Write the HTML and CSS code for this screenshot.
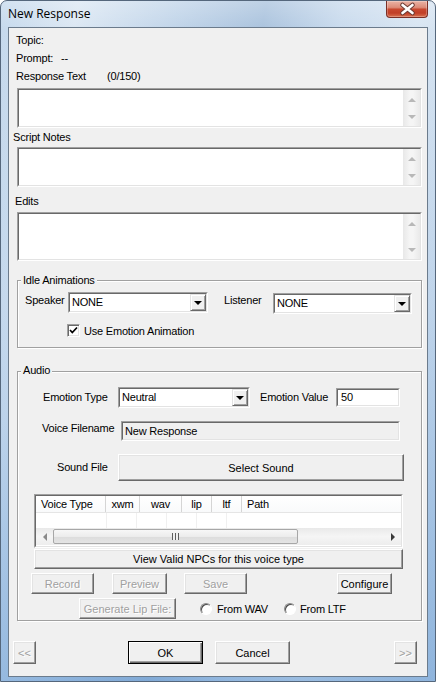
FILE: index.html
```html
<!DOCTYPE html>
<html lang="en">
<head>
    <meta charset="UTF-8">
    <title>New Response</title>
    <link rel="stylesheet" href="styles.css">
</head>
<body>
    <div class="window">
        <div class="titlebar">
            <span class="title">New Response</span>
            <div class="close-btn">
                <svg width="40" height="16" viewBox="0 0 40 16">
                    <path d="M15.5 4 L25.5 12 M25.5 4 L15.5 12" stroke="#6b3a33" stroke-width="4.6" stroke-linecap="round"/>
                    <path d="M15.5 4 L25.5 12 M25.5 4 L15.5 12" stroke="#fff" stroke-width="2.6" stroke-linecap="round"/>
                </svg>
            </div>
        </div>

        <div class="client">
            <div class="txt topic">Topic:</div>
            <div class="txt prompt"><span class="prompt-lbl">Prompt:</span><span>--</span></div>
            <div class="txt resp"><span class="resp-lbl">Response Text</span><span>(0/150)</span></div>
            <div class="memo memo-resp">
                <div class="memo-in">
                    <div class="vscroll"><i class="tri up"></i><i class="tri down"></i></div>
                </div>
            </div>

            <div class="txt notes-lbl">Script Notes</div>
            <div class="memo memo-notes">
                <div class="memo-in">
                    <div class="vscroll"><i class="tri up"></i><i class="tri down"></i></div>
                </div>
            </div>

            <div class="txt edits-lbl">Edits</div>
            <div class="memo memo-edits">
                <div class="memo-in">
                    <div class="vscroll"><i class="tri up"></i><i class="tri down"></i></div>
                </div>
            </div>

            <!-- idle animations -->
            <div class="group idle">
                <span class="group-title">Idle Animations</span>
                <div class="row anim-row">
                    <span class="lbl speaker-lbl">Speaker</span>
                    <div class="combo speaker-combo">
                        <div class="combo-in">
                            <span class="combo-val">NONE</span>
                            <span class="drop"><i class="tri blk"></i></span>
                        </div>
                    </div>
                    <span class="lbl listener-lbl">Listener</span>
                    <div class="combo listener-combo">
                        <div class="combo-in">
                            <span class="combo-val">NONE</span>
                            <span class="drop"><i class="tri blk"></i></span>
                        </div>
                    </div>
                </div>
                <div class="row check-row">
                    <span class="checkbox">
                        <svg width="9" height="9" viewBox="0 0 9 9"><path d="M1 4 L3.3 6.5 L8 1.5" fill="none" stroke="#000" stroke-width="1.7"/></svg>
                    </span>
                    <span class="check-lbl">Use Emotion Animation</span>
                </div>
            </div>

            <!-- audio -->
            <div class="group audio">
                <span class="group-title">Audio</span>
                <div class="row emo-row">
                    <span class="lbl emo-type-lbl">Emotion Type</span>
                    <div class="combo emo-combo">
                        <div class="combo-in">
                            <span class="combo-val">Neutral</span>
                            <span class="drop"><i class="tri blk"></i></span>
                        </div>
                    </div>
                    <span class="lbl emo-val-lbl">Emotion Value</span>
                    <div class="edit emo-val"><div class="edit-in">50</div></div>
                </div>
                <div class="row voice-row">
                    <span class="lbl voice-lbl">Voice Filename</span>
                    <div class="edit voice-file"><div class="edit-in readonly">New Response</div></div>
                </div>
                <div class="row sound-row">
                    <span class="lbl sound-lbl">Sound File</span>
                    <button class="btn select-sound">Select Sound</button>
                </div>

                <div class="listview">
                    <div class="lv-in">
                        <div class="lv-head">
                            <span class="col c1">Voice Type</span>
                            <span class="col c2">xwm</span>
                            <span class="col c3">wav</span>
                            <span class="col c4">lip</span>
                            <span class="col c5">ltf</span>
                            <span class="col c6">Path</span>
                        </div>
                        <div class="lv-rows">
                            <span class="rc first"></span><span class="rc"></span><span class="rc"></span><span class="rc"></span><span class="rc"></span>
                        </div>
                        <div class="hscroll">
                            <span class="sb-btn"><i class="tri left"></i></span>
                            <div class="thumb"><span class="grip"></span></div>
                            <span class="sb-space"></span>
                            <span class="sb-btn"><i class="tri right"></i></span>
                        </div>
                    </div>
                </div>
                <button class="btn npc-btn">View Valid NPCs for this voice type</button>

                <div class="row rec-row">
                    <button class="btn disabled rec">Record</button>
                    <button class="btn disabled preview">Preview</button>
                    <button class="btn disabled save">Save</button>
                    <button class="btn configure">Configure</button>
                </div>
                <div class="row lip-row">
                    <button class="btn disabled gen-lip">Generate Lip File:</button>
                    <span class="radio wav-radio"></span>
                    <span class="radio-lbl wav-lbl">From WAV</span>
                    <span class="radio"></span>
                    <span class="radio-lbl ltf-lbl">From LTF</span>
                </div>
            </div>

            <div class="row dlg-buttons">
                <button class="btn disabled prev">&lt;&lt;</button>
                <button class="btn default ok">OK</button>
                <button class="btn cancel">Cancel</button>
                <button class="btn disabled next">&gt;&gt;</button>
            </div>
        </div>
    </div>
</body>
</html>
```

FILE: styles.css
```css
* {
    box-sizing: border-box;
}
body {
    margin: 0;
    font-family: "Liberation Sans", Arial, sans-serif;
    font-size: 11px;
    letter-spacing: -0.2px;
    color: #000;
    background: #fff;
}
.window {
    width: 436px;
    height: 682px;
    border: 1px solid #55677c;
    border-radius: 7px 7px 0 0;
    padding: 0 7px 4px 7px;
    display: flex;
    flex-direction: column;
    background:
        linear-gradient(180deg, rgba(255,255,255,0.25) 0, rgba(255,255,255,0) 30px, rgba(110,160,215,0.15) 300px, rgba(80,140,205,0.45) 100%),
        linear-gradient(100deg, #c4d8ec 0%, #dbe7f3 14%, #c0d4e9 32%, #a9c2dd 48%, #c8daed 62%, #d8e5f2 76%, #c3d6ea 100%);
}
.titlebar {
    height: 26px;
    display: flex;
    justify-content: space-between;
    align-items: flex-start;
}
.title {
    font-family: "Open Sans", "Noto Sans", sans-serif;
    font-size: 12px;
    letter-spacing: 0;
    line-height: 16px;
    margin-top: 5px;
}
.close-btn {
    width: 42px;
    height: 17px;
    border: 1px solid #7b2f26;
    border-top: none;
    border-radius: 0 0 4px 4px;
    background: linear-gradient(180deg, #eab3a5 0%, #dd8c79 40%, #c8482f 52%, #c13f27 75%, #d9714f 100%);
    box-shadow: inset 0 0 0 1px rgba(255,255,255,0.25);
}
.close-btn svg {
    display: block;
}
.client {
    flex: 1;
    border: 1px solid #6b7b8c;
    background: #f0f0f0;
}
.txt {
    height: 14px;
    line-height: 14px;
}
.topic {
    margin: 5px 0 0 7px;
}
.prompt {
    margin: 4px 0 0 7px;
    display: flex;
}
.prompt-lbl {
    width: 45px;
}
.resp {
    margin: 4px 0 0 7px;
    display: flex;
}
.resp-lbl {
    width: 91px;
}
.notes-lbl {
    margin: 2px 0 0 4px;
}
.edits-lbl {
    margin: 7px 0 0 6px;
}

/* sunken edit boxes */
.memo, .combo, .edit, .listview {
    border: 1px solid;
    border-color: #a0a0a0 #fff #fff #a0a0a0;
}
.memo-in, .combo-in, .edit-in, .lv-in {
    height: 100%;
    border: 1px solid;
    border-color: #696969 #e3e3e3 #e3e3e3 #696969;
    background: #fff;
}
.memo {
    width: 405px;
    margin-left: 8px;
}
.memo-resp {
    margin-top: 5px;
    height: 40px;
}
.memo-notes {
    margin-top: 3px;
    height: 40px;
}
.memo-edits {
    margin-top: 4px;
    height: 49px;
}
.memo-in {
    display: flex;
    justify-content: flex-end;
}
.vscroll {
    width: 17px;
    background: linear-gradient(90deg, #e8e8e8, #f5f5f5 40%, #f5f5f5 60%, #e9e9e9);
    display: flex;
    flex-direction: column;
    justify-content: space-between;
    align-items: center;
    padding: 8px 0 7px;
}
.tri {
    display: block;
    width: 0;
    height: 0;
}
.tri.up {
    border-left: 4px solid transparent;
    border-right: 4px solid transparent;
    border-bottom: 4px solid #b8b8b8;
}
.tri.down {
    border-left: 4px solid transparent;
    border-right: 4px solid transparent;
    border-top: 4px solid #b8b8b8;
}
.tri.blk {
    border-left: 4px solid transparent;
    border-right: 4px solid transparent;
    border-top: 4px solid #000;
}
.tri.left {
    border-top: 4px solid transparent;
    border-bottom: 4px solid transparent;
    border-right: 4px solid #8a8a8a;
}
.tri.right {
    border-top: 4px solid transparent;
    border-bottom: 4px solid transparent;
    border-left: 4px solid #3a3a3a;
}

/* group boxes */
.group {
    width: 405px;
    margin-left: 8px;
    border: 1px solid #a0a0a0;
    box-shadow: inset 1px 1px 0 #fff, 1px 1px 0 #fff;
}
.group-title {
    display: block;
    width: fit-content;
    line-height: 14px;
    padding: 0 2px;
    margin: -8px 0 0 3px;
    background: #f0f0f0;
}
.row {
    display: flex;
    align-items: flex-start;
}
.lbl {
    line-height: 14px;
}
.idle {
    margin-top: 19px;
    height: 68px;
}
.anim-row {
    margin-top: 5px;
    height: 21px;
}
.speaker-lbl {
    margin: 1px 0 0 7px;
    width: 43px;
}
.speaker-combo {
    width: 140px;
}
.listener-lbl {
    margin: 1px 0 0 16px;
    width: 49px;
}
.listener-combo {
    width: 139px;
    margin-top: 1px;
}
.combo {
    height: 21px;
}
.combo-in {
    display: flex;
}
.combo-val {
    flex: 1;
    line-height: 17px;
    padding-left: 2px;
}
.drop {
    width: 16px;
    height: 17px;
    display: flex;
    align-items: center;
    justify-content: center;
    background: #f0f0f0;
    border: 1px solid;
    border-color: #e3e3e3 #696969 #696969 #e3e3e3;
    box-shadow: inset 1px 1px #fff, inset -1px -1px #a0a0a0;
}
.check-row {
    margin: 11px 0 0 49px;
    height: 13px;
    align-items: center;
}
.checkbox {
    width: 13px;
    height: 13px;
    border: 1px solid;
    border-color: #a0a0a0 #fff #fff #a0a0a0;
    box-shadow: inset 1px 1px #696969, inset -1px -1px #e3e3e3;
    background: #fff;
    display: flex;
    align-items: center;
    justify-content: center;
}
.check-lbl {
    margin-left: 4px;
    line-height: 14px;
}

/* audio */
.audio {
    margin-top: 23px;
    height: 250px;
}
.audio .group-title {
    margin-top: -9px;
}
.emo-row {
    margin-top: 10px;
    height: 21px;
}
.emo-type-lbl {
    margin: 3px 0 0 25px;
    width: 75px;
}
.emo-combo {
    width: 132px;
}
.emo-val-lbl {
    margin: 3px 0 0 10px;
    width: 76px;
}
.edit-in {
    line-height: 15px;
    padding-left: 3px;
}
.emo-val {
    width: 64px;
    height: 19px;
    margin-top: 1px;
}
.voice-row {
    margin-top: 13px;
    height: 20px;
}
.voice-lbl {
    margin-left: 24px;
    width: 79px;
}
.voice-file {
    width: 279px;
    height: 20px;
}
.edit-in.readonly {
    background: #f0f0f0;
    line-height: 16px;
    padding-left: 2px;
}
.sound-row {
    margin-top: 13px;
    height: 27px;
}
.sound-lbl {
    margin: 6px 0 0 39px;
    width: 61px;
}

/* buttons */
.btn {
    font: inherit;
    color: #000;
    padding: 0;
    background: #f0f0f0;
    border: 1px solid;
    border-color: #fff #696969 #696969 #fff;
    box-shadow: inset -1px -1px #a0a0a0, inset 1px 1px #e3e3e3;
    display: flex;
    align-items: center;
    justify-content: center;
    height: 21px;
}
.btn.disabled {
    color: #a0a0a0;
    text-shadow: 1px 1px 0 #fff;
}
.btn.default {
    border-color: #000;
    box-shadow: inset 1px 1px #fff, inset -1px -1px #696969, inset -2px -2px #a0a0a0;
}
.select-sound {
    width: 286px;
    height: 27px;
}

/* list view */
.listview {
    margin: 13px 0 0 16px;
    width: 369px;
    height: 54px;
}
.lv-in {
    display: flex;
    flex-direction: column;
}
.lv-head {
    height: 17px;
    display: flex;
    border-bottom: 1px solid #e5e5e5;
    background: linear-gradient(180deg, #fff, #f9fafb);
}
.col {
    line-height: 16px;
    border-right: 1px solid #d5d5d5;
    text-align: center;
}
.c1 {
    width: 70px;
    text-align: left;
    padding-left: 5px;
}
.c2 {
    width: 34px;
}
.c3 {
    width: 42px;
}
.c4 {
    width: 30px;
}
.c5 {
    width: 30px;
}
.c6 {
    flex: 1;
    border-right: none;
    text-align: left;
    padding-left: 5px;
}
.lv-rows {
    height: 15px;
    display: flex;
}
.rc {
    width: 30px;
    border-right: 1px solid #f0f0f0;
}
.rc.first {
    width: 71px;
}
.hscroll {
    height: 17px;
    display: flex;
    align-items: center;
    background: linear-gradient(180deg, #e9e9e9, #f5f5f5 50%, #ededed);
}
.sb-btn {
    width: 17px;
    height: 17px;
    display: flex;
    align-items: center;
    justify-content: center;
}
.thumb {
    width: 245px;
    height: 15px;
    border: 1px solid #a7a7a7;
    border-radius: 2px;
    background: linear-gradient(180deg, #f7f7f7, #ececec 50%, #dcdcdc 51%, #e4e4e4);
    display: flex;
    align-items: center;
    justify-content: center;
}
.grip {
    width: 7px;
    height: 7px;
    background: repeating-linear-gradient(90deg, #5e5e5e 0, #5e5e5e 1px, #f0f0f0 1px, #f0f0f0 3px);
}
.sb-space {
    flex: 1;
}
.npc-btn {
    margin: 1px 0 0 16px;
    width: 369px;
    height: 20px;
}
.rec-row {
    margin-top: 4px;
    height: 21px;
}
.rec {
    margin-left: 13px;
    width: 63px;
}
.preview {
    margin-left: 18px;
    width: 55px;
}
.save {
    margin-left: 17px;
    width: 63px;
}
.configure {
    margin-left: 90px;
    width: 55px;
}
.lip-row {
    margin-top: 4px;
    height: 21px;
    align-items: center;
}
.gen-lip {
    margin-left: 61px;
    width: 97px;
}
.radio {
    width: 12px;
    height: 12px;
    border-radius: 50%;
    border: 1px solid;
    border-color: #8a8a8a #fff #fff #8a8a8a;
    box-shadow: inset 1px 1px #4a4a4a;
    background: #fff;
}
.wav-radio {
    margin-left: 24px;
}
.radio-lbl {
    line-height: 14px;
}
.wav-lbl {
    margin-left: 5px;
    width: 67px;
}
.ltf-lbl {
    margin-left: 4px;
}

/* dialog buttons */
.dlg-buttons {
    margin-top: 20px;
    height: 23px;
}
.dlg-buttons .btn {
    height: 23px;
}
.prev {
    margin-left: 4px;
    width: 23px;
}
.ok {
    margin-left: 92px;
    width: 75px;
}
.cancel {
    margin-left: 12px;
    width: 75px;
}
.next {
    margin-left: 104px;
    width: 23px;
}
```
